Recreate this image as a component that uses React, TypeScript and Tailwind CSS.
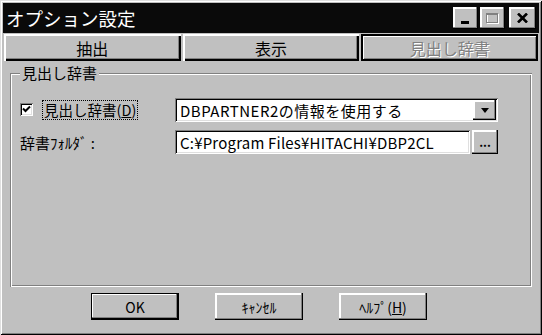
import React from "react";

const raised =
  "shadow-[inset_-1px_-1px_0_#000,inset_-2px_-2px_0_#808080,inset_2px_2px_0_#fff]";
const raisedDefault =
  "shadow-[inset_0_0_0_1px_#000,inset_-2px_-2px_0_#000,inset_-3px_-3px_0_#808080,inset_2px_2px_0_#fff]";
const sunken =
  "shadow-[inset_1px_1px_0_#808080,inset_-1px_-1px_0_#fff,inset_2px_2px_0_#000,inset_-2px_-2px_0_#dfdfdf]";

function TitleButton({ children, className = "" }: { children: React.ReactNode; className?: string }) {
  return (
    <div className={`h-[22px] bg-[#c0c0c0] flex items-center justify-center ${raised} ${className}`}>
      {children}
    </div>
  );
}

function Tab({ label, selected = false }: { label: string; selected?: boolean }) {
  return (
    <div
      className={`flex-1 h-[27px] flex items-center justify-center text-[16px] leading-none ${
        selected
          ? "shadow-[inset_0_0_0_2px_#000,inset_3px_3px_0_#fff,inset_-3px_-3px_0_#808080] text-[#808080] [text-shadow:1px_1px_0_#fff]"
          : "shadow-[inset_2px_2px_0_#fff,inset_-1px_-1px_0_#000,inset_-2px_-2px_0_#000,inset_-3px_-3px_0_#808080] text-black"
      }`}
    >
      {label}
    </div>
  );
}

function DlgButton({ children, def = false }: { children: React.ReactNode; def?: boolean }) {
  return (
    <div
      className={`w-[88px] h-[27px] flex items-center justify-center text-[14px] leading-none ${
        def ? raisedDefault : raised
      }`}
    >
      {children}
    </div>
  );
}

export default function App() {
  return (
    <div className="w-[542px] h-[335px] bg-[#c0c0c0] font-['Noto_Sans_CJK_JP',sans-serif] text-black overflow-hidden">
      <div className="h-full p-[3px] flex flex-col shadow-[inset_1px_1px_0_#dfdfdf,inset_-1px_-1px_0_#000,inset_2px_2px_0_#fff,inset_-2px_-2px_0_#808080]">
        {/* Title bar */}
        <div className="h-[30px] bg-[#0a0a0a] flex items-center justify-between pl-[3px] pr-[3px]">
          <span className="text-white text-[18.5px] leading-none">オプション設定</span>
          <div className="flex items-center">
            <TitleButton className="w-[25px]">
              <div className="w-[8px] h-[3px] bg-black mt-[8px] -ml-[2px]" />
            </TitleButton>
            <TitleButton className="w-[25px] ml-[2px]">
              <svg width="15" height="13" viewBox="0 0 15 13">
                <rect x="2.5" y="2.5" width="11" height="9" fill="none" stroke="#fff" strokeWidth="1" />
                <rect x="1.5" y="1.5" width="11" height="9" fill="none" stroke="#808080" strokeWidth="1" />
                <rect x="1" y="1" width="12" height="2" fill="#808080" />
              </svg>
            </TitleButton>
            <TitleButton className="w-[27px] ml-[4px]">
              <svg width="11" height="10" viewBox="0 0 11 10">
                <path d="M1 0.5 L10 9.5 M10 0.5 L1 9.5" stroke="#000" strokeWidth="2.6" />
              </svg>
            </TitleButton>
          </div>
        </div>

        {/* Tabs */}
        <div className="h-[29px] flex items-start gap-[2px] px-[1px] pt-[1px]">
          <Tab label="抽出" />
          <Tab label="表示" />
          <Tab label="見出し辞書" selected />
        </div>

        {/* Body */}
        <div className="flex-1 px-[7px] pt-[11px] flex flex-col">
          <div className="relative h-[214px] shadow-[inset_1px_1px_0_#808080,inset_-1px_-1px_0_#fff,inset_2px_2px_0_#fff,inset_-2px_-2px_0_#808080]">
            <span className="absolute left-[10px] top-[-9px] px-[2px] bg-[#c0c0c0] text-[15px] leading-[18px]">
              見出し辞書
            </span>
            <div className="pt-[25px] pl-[10px] flex flex-col gap-[8px]">
              {/* Row 1 */}
              <div className="flex items-center h-[24px]">
                <div className="w-[155px] flex items-center">
                  <div className={`w-[13px] h-[13px] bg-white flex items-center justify-center ${sunken} -mt-[2px]`}>
                    <svg width="9" height="8" viewBox="0 0 9 8">
                      <path d="M1 3.5 L3.5 6 L8 1.5" fill="none" stroke="#000" strokeWidth="2" />
                    </svg>
                  </div>
                  <div className="ml-[9px] h-[20px] px-[1px] flex items-center border border-dotted border-black text-[14.5px] leading-none">
                    見出し辞書(<span className="underline">D</span>)
                  </div>
                </div>
                <div className={`w-[323px] h-[24px] bg-white flex items-center justify-between p-[2px] ${sunken}`}>
                  <span className="pl-[3px] text-[15px] leading-none tracking-[0.5px]">DBPARTNER2の情報を使用する</span>
                  <div className={`w-[23px] h-[20px] bg-[#c0c0c0] flex items-center justify-center ${raised}`}>
                    <svg width="8" height="5" viewBox="0 0 8 5">
                      <path d="M0 0 H8 L4 5 Z" fill="#000" />
                    </svg>
                  </div>
                </div>
              </div>
              {/* Row 2 */}
              <div className="flex items-center h-[24px]">
                <div className="w-[155px] text-[15px] leading-none">辞書ﾌｫﾙﾀﾞ :</div>
                <div className={`w-[295px] h-[24px] bg-white flex items-center p-[2px] ${sunken}`}>
                  <span className="pl-[3px] text-[15px] leading-none tracking-[0.2px]">C:¥Program Files¥HITACHI¥DBP2CL</span>
                </div>
                <div className={`ml-[2px] w-[26px] h-[24px] flex items-end justify-center pb-[6px] text-[12px] leading-none font-bold ${raised}`}>
                  ...
                </div>
              </div>
            </div>
          </div>

          {/* Buttons */}
          <div className="mt-[6px] pl-[81px] flex gap-[36px]">
            <DlgButton def>OK</DlgButton>
            <DlgButton>ｷｬﾝｾﾙ</DlgButton>
            <DlgButton>
              ﾍﾙﾌﾟ(<span className="underline">H</span>)
            </DlgButton>
          </div>
        </div>
      </div>
    </div>
  );
}
